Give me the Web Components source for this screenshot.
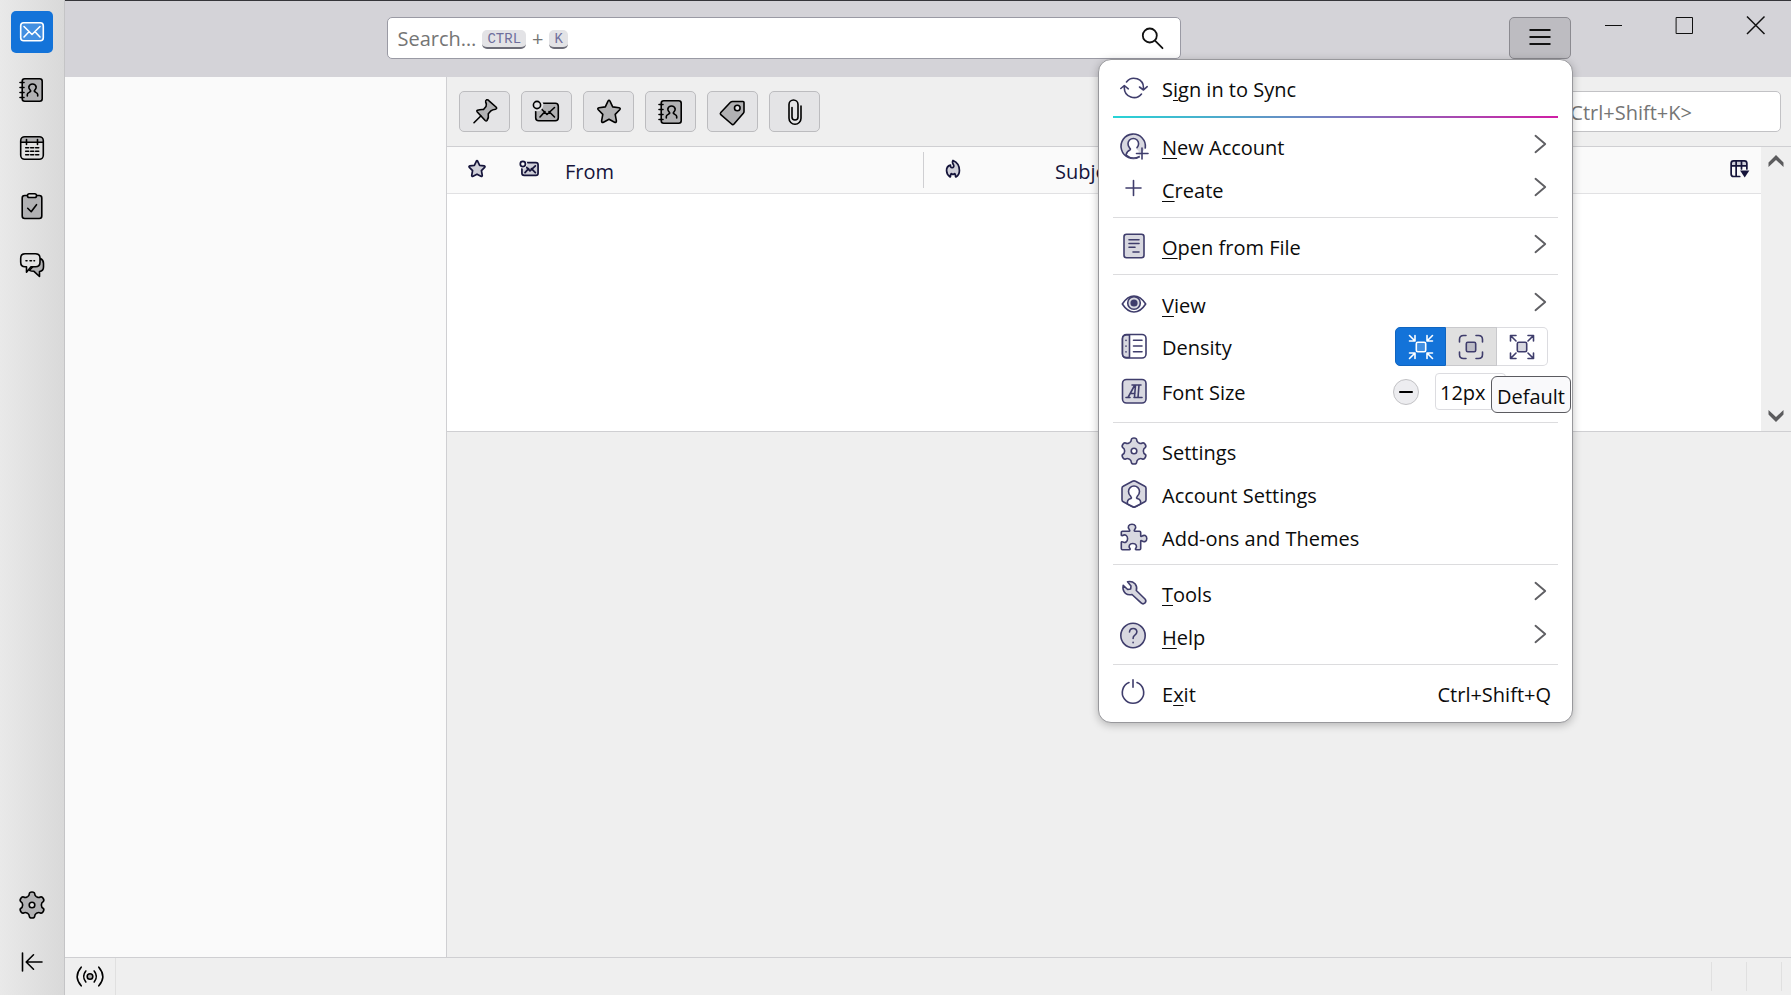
<!DOCTYPE html>
<html lang="en">
<head>
<meta charset="utf-8">
<title>Mail</title>
<style>
  html, body { margin: 0; height: 100%; }
  body { font: 20px/27px "Open Sans", "Noto Sans", sans-serif; color: #0b0b0b; background: #efefef; overflow: hidden; }
</style>
</head>
<body>
<mail-window></mail-window>
<script>
const gearPath = (() => {
  const pts = [[-4.3, -8.4], [-2.7, -9.4], [-2.7, -11.2], [-2.6, -13], [0, -13], [2.6, -13], [2.7, -11.2], [2.7, -9.4], [4.3, -8.4]];
  let d = '';
  for (let k = 0; k < 6; k++) {
    const a = k * Math.PI / 3, c = Math.cos(a), s = Math.sin(a);
    const p = pts.map(([x, y]) => (14 + x * c - y * s).toFixed(2) + ' ' + (14 + x * s + y * c).toFixed(2));
    d += (k ? 'L' : 'M') + p[0] + 'Q' + p[1] + ' ' + p[2] + 'Q' + p[3] + ' ' + p[4] + 'Q' + p[5] + ' ' + p[6] + 'Q' + p[7] + ' ' + p[8];
  }
  return d + 'z';
})();

const ICONS = {
  mail: '<rect class="f" x="2.700" y="4.700" width="22.600" height="18" rx="3"/><path d="M6 8.500l8 8 8-8M6 19l5-5.300M22 19l-5-5.300"/>',
  contacts: '<rect class="f" x="4.200" y="2.700" width="20" height="22.600" rx="2.500"/><path d="M2 6.500h4M2 11.500h4M2 16.500h4M2 21.500h4M9.300 20v-1.500c0-2 2.800-2 3.400-3.300.300-.800-1.900-1.900-1.900-4.200a3.800 3.800 0 0 1 7.400 0c0 2.300-2.200 3.400-1.900 4.200.600 1.300 3.400 1.300 3.400 3.300V20"/>',
  calendar: '<path class="f" stroke="none" d="M3 8V6q0-3 3-3h16q3 0 3 3v2z"/><rect x="2.700" y="2.700" width="22.600" height="22.600" rx="4"/><path d="M3 8.200h22M8.500 5.500v5M19.500 5.500v5"/><path d="M7.700 13.800h3M12.700 13.800h3M17.700 13.800h3M7.700 17.300h3M12.700 17.300h3M17.700 17.300h3M7.700 20.800h3M12.700 20.800h3M17.700 20.800h3"/>',
  tasks: '<rect class="f" x="4.200" y="3.500" width="19.600" height="23" rx="2.500"/><rect class="b" x="9.500" y="1.700" width="9" height="3.800" rx="1.800"/><path d="M9.700 16.300l3.500 3.400 5.300-7"/>',
  chat: '<path class="f" d="M22.500 8.500q3 1.500 3 5v3.500q0 4-4 4.500v5l-5.500-5.200q-3 0-4.500-1z"/><path class="b" d="M7 3.700h10.500q4.500 0 4.500 4.500v4q0 4.500-4.500 4.500h-4.500l-4.500 5.500v-5.500H7q-4.300 0-4.300-4.500v-4q0-4.500 4.300-4.500z"/><path d="M8 10.700h1M12 10.700h1.500M16 10.700h.5"/>',
  gear: '<path class="f" d="' + gearPath + '"/><circle class="b" cx="14" cy="14" r="2.800"/>',
  collapse: '<path d="M4.500 4v18M24 13H8.500M15.500 5.800L8.200 13l7.300 7.200"/>',
  search: '<circle cx="11.800" cy="11.500" r="7"/><path d="M17 16.700l7.500 7.500"/>',
  lines: '<path stroke-linecap="butt" d="M3.500 6h21M3.500 13h21M3.500 20h21"/>',
  pin: '<path class="f" d="M15.500 1.800Q17 1.500 18 2.800l7 6.200q1.500 1.700-.5 2.200-3 .3-5 2l-2.200 2.600q.7 4-1.300 6.700-.8.900-1.800 0L6.300 14q-1-1.200.2-1.800 3-1 6-.7L15 8.500q.9-2.300-.3-4.500-.3-1.500.8-2.200z"/><path d="M9.800 18L3 24.700"/>',
  unread: '<rect class="f" x="2.700" y="5.200" width="22.600" height="17.600" rx="3"/><path d="M7 19l5-5.500M6.500 9l7.500 7.500 7.500-7M16 13.500l5.500 5.500"/><circle class="b" stroke="none" cx="4" cy="7" r="6.300"/><circle class="b" cx="4" cy="7" r="3.600"/>',
  star: '<path class="f" d="M13 3.200q1-1.800 2 0l2.700 5.700 6.300.8q2 .5.700 2l-4.500 4.700 1.200 6.500q0 2-1.900 1.300L14 21.300l-5.500 2.900q-1.900.7-1.900-1.300l1.200-6.500-4.500-4.700q-1.300-1.500.7-2l6.300-.8z"/>',
  tag: '<path class="f" d="M13.500 3.500h10.500q1 0 1 1v9q0 1-.7 1.700L15 26q-1.200 1.200-2.400 0L1.800 16.700q-1-1.100 0-2.200L11.500 4.300q.8-.8 2-.8z"/><circle class="b" cx="18.300" cy="10" r="2.800"/>',
  clip: '<path d="M20 8v12.200a6 6 0 0 1-12 0V6.500a4.500 4.500 0 0 1 9 0V19a3 3 0 0 1-6 0V9.500"/>',
  fire: '<path class="f" d="M14 2c-1.500 2.500-.5 4.500.8 6.300 1 2-.3 4-2 3.900-2-.2-2.600-1.800-2.300-3.700C6.500 9.500 4.800 13 5 16.500c.2 3.800 2 6.800 5 8.700 1-.7.300-2.300 1-4 1-1.600 1.600.3 3 .3s2-1.900 3-.3c.7 1.700 0 3.300 1 4 3-1.900 5-4.900 5-9.200C23 9.500 19.500 4.300 14 2z"/>',
  columns: '<path class="f" stroke="none" d="M3 9V6q0-3 3-3h15q3 0 3 3v3z"/><path d="M25 14V6q0-3.500-3.500-3.500h-15Q3 2.500 3 6v15q0 3.500 3.500 3.500H15M3 9.500h22M10 3v21.500M17.500 3v11"/><path fill="currentColor" stroke="none" d="M15.500 16h13l-6.500 10z"/>',
  up: '<path fill="currentColor" stroke="none" d="M14 6l7.500 7.500v4.500L14 11l-7.500 7v-4.500z"/>',
  down: '<path fill="currentColor" stroke="none" d="M14 22l-7.500-7.500v-4.500L14 17l7.500-7v4.500z"/>',
  online: '<circle class="f" cx="14" cy="13.500" r="2.800"/><path d="M9.800 8q-4.300 5.500 0 11M18.200 8q4.300 5.500 0 11M5.200 4.200q-8 9.300 0 18.600M22.800 4.200q8 9.300 0 18.600"/>',
  sync: '<path d="M23.500 15.500V14A9.500 9.500 0 0 0 6.500 8M4.300 12v2a9.700 9.700 0 0 0 17.200 6M19.500 13l4 3 3.700-3.300M.8 14.500L4.300 11.500l4 3.300"/>',
  newaccount: '<path class="f" d="M19 25A12.200 12.200 0 1 1 25.300 16"/><path class="b" d="M6.500 23q1-4 4-5 1-.8-.5-2.200-1.500-1.800-1.500-4a5 5 0 0 1 10 0q0 2.200-1.500 4-1.200 1.200 0 2l1.500 1 .5 6.500q-7 3-12.500-2.300z" stroke="none"/><path d="M19 24.800Q12 28 6 23q1-4 4-5 1-.8-.5-2.200-1.500-1.800-1.500-4a5.300 5.300 0 0 1 10.600 0q0 2.200-1.600 3.800M22 16v11M16.500 21.500h11.500"/>',
  plus: '<path d="M13.500 5.500v15M6 13h15"/>',
  file: '<rect class="f" x="4" y="2.200" width="20" height="23.600" rx="2.500"/><path d="M9 7.800h10M9 11.500h10M9 15.200h6M13 20h6"/>',
  eye: '<path class="b" d="M2.300 14Q7.500 6 14 6t11.700 8Q20.500 22 14 22T2.300 14z"/><circle class="f" cx="14" cy="13" r="6.300"/><circle cx="14" cy="13" r="3.600" fill="currentColor" stroke="none"/>',
  density: '<rect x="2.500" y="1.500" width="23.500" height="23.500" rx="4"/><path class="f" d="M9.500 2H6.500q-4 0-4 4v14.500q0 4 4 4h3z"/><path d="M13.500 7.300h8.500M13.500 13h8.500M13.500 18.700h8.500M6 7.300v.2M6 13v.2M6 18.700v.2"/>',
  font: '<rect class="f" x="2.500" y="1.500" width="23.500" height="23.500" rx="4"/><path d="M6 19.500h4M14 19.500h8M8 19.500L14.800 7H12M13.500 7h7.500M19 7l-1 12.500M15.500 7l-1 12M10 15.500h5"/>',
  account: '<path class="f" d="M12.500 1.200q1.500-.7 3 0l9.300 5q1.200.6 1.200 2v11.600q0 1.400-1.200 2l-9.300 5q-1.500.7-3 0l-9.300-5q-1.200-.6-1.200-2V8.200q0-1.400 1.200-2z"/><path class="b" d="M7.500 24q-1-4.500 3.500-5.500.8-.8-.5-2.500-2-2-2-4.500a5.500 5.500 0 0 1 11 0q0 2.500-2 4.500-1.300 1.700-.5 2.500 4.500 1 3.500 5.500L14 27.200z"/>',
  addons: '<path class="f" d="M2.500 8.200H9.200C9.900 8.200 9.900 7.300 9.400 6.700 7 4 8.800 1.200 12 1.200s5 2.800 2.600 5.500c-.5.6-.5 1.500.4 1.500H19.500a1.200 1.200 0 0 1 1.200 1.200v3.400c0 .8.7.9 1.300.4 2.200-1.800 4.800-.6 4.800 2.300s-2.600 4.100-4.800 2.300c-.6-.5-1.300-.4-1.300.4V25.600a1.200 1.200 0 0 1-1.200 1.200H16.200c-.9 0-1-.7-.5-1.400 1.800-2.400.4-4.900-2.900-4.900s-4.700 2.500-2.900 4.900c.5.7.4 1.400-.5 1.400H2.500a1.200 1.200 0 0 1-1.200-1.200V19.500c0-.8.7-.9 1.300-.6 2.600 1.600 5-.2 5-3.200s-2.400-4.800-5-3.200c-.6.3-1.300.2-1.300-.6V9.500a1.200 1.200 0 0 1 1.200-1.300z"/>',
  wrench: '<path class="f" d="M7.500 2.800q4.500-1 7.500 2 2.500 3 1.300 6.700l8.700 8.500q1.700 2 0 3.900-2 1.800-3.900 0L12 15.500q-3.700 1-6.500-1.200-3.300-3-2.300-8l4.500 4.200 3-.5.300-3z"/>',
  help: '<circle class="f" cx="13" cy="13.500" r="12.200"/><path d="M9.500 10q.3-3.500 3.700-3.500t3.700 3.300q0 2-2.300 3.500-1.500 1-1.500 3.200M13.100 20.400v.3"/>',
  power: '<path d="M9 3.600a10.700 10.700 0 1 0 8 0M13 .7v7.500"/>',
  chevron: '<path d="M9.500 5.800l9.700 8.200-9.700 8.200"/>',
  minus: '<path d="M8 14h12"/>',
  compact: '<rect class="f" x="9.300" y="9.300" width="9.400" height="9.400" rx="1.500"/><path d="M2.500 2.500L8 8M8 2.500V8H2.500M25.500 2.500L20 8M20 2.500V8h5.500M2.500 25.500L8 20M8 25.500V20H2.500M25.500 25.500L20 20M20 25.500V20h5.500"/>',
  normal: '<rect class="f" x="9.300" y="9.300" width="9.400" height="9.400" rx="1.500"/><path d="M2.500 9V6.500q0-4 4-4H9M19 2.500h2.500q4 0 4 4V9M25.500 19v2.500q0 4-4 4H19M9 25.500H6.500q-4 0-4-4V19"/>',
  relaxed: '<rect class="f" x="9.300" y="9.300" width="9.400" height="9.400" rx="1.500"/><path d="M8 8L2.500 2.500M2.500 8V2.500H8M20 8l5.500-5.500M25.500 8V2.500H20M8 20l-5.500 5.500M2.500 20v5.500H8M20 20l5.500 5.500M25.500 20v5.500H20"/>',
  minimise: '<path stroke-linecap="butt" stroke-width="1" d="M5 14.500h17"/>',
  maximise: '<rect x="5.500" y="6.500" width="16" height="16" stroke-width="1"/>',
  close: '<path stroke-linecap="butt" d="M5 5.500l17.500 17.500M22.500 5.500L5 23"/>'
};

function define(name, html, setup) {
  const template = document.createElement('template');
  template.innerHTML = html;
  customElements.define(name, class extends HTMLElement {
    constructor() {
      super();
      this.attachShadow({ mode: 'open' }).append(template.content.cloneNode(true));
    }
    connectedCallback() { if (setup) setup(this, this.shadowRoot); }
  });
}

define('mail-icon', `
<style>
  :host { display: inline-flex; flex: none; }
  svg { display: block; width: var(--icon-size, 28px); height: var(--icon-size, 28px); overflow: visible; fill: none; stroke: currentColor; stroke-width: var(--icon-stroke, 1.6); stroke-linecap: round; stroke-linejoin: round; }
  .f { fill: var(--icon-fill, #b1b1b3); }
  .b { fill: var(--icon-back, #e4e4e6); }
</style>
<svg viewBox="0 0 28 28" aria-hidden="true"></svg>`,
(el, root) => { root.querySelector('svg').innerHTML = ICONS[el.getAttribute('name')]; });

define('space-button', `
<style>
  :host { display: block; }
  button { display: flex; align-items: center; justify-content: center; width: 42px; height: 42px; padding: 0; border: 0; border-radius: 5px; background: none; color: #000; --icon-back: #e2e2e2; }
  :host([current]) button { background: #1373d9; color: #fff; --icon-fill: #428fe1; --icon-back: #1373d9; }
</style>
<button></button>`,
(el, root) => {
  const button = root.querySelector('button');
  button.innerHTML = `<mail-icon name="${el.getAttribute('icon')}"></mail-icon>`;
  button.setAttribute('aria-label', el.getAttribute('label'));
});

define('spaces-bar', `
<style>
  :host { display: flex; flex-direction: column; align-items: center; gap: 16px; padding: 11px 0; border-right: 1px solid #c4c4c6; background: linear-gradient(90deg, #e9e9e9, #d9d9d9); }
  .push { flex: 1; }
</style>
<space-button current icon="mail" label="Mail"></space-button>
<space-button icon="contacts" label="Address Book"></space-button>
<space-button icon="calendar" label="Calendar"></space-button>
<space-button icon="tasks" label="Tasks"></space-button>
<space-button icon="chat" label="Chat"></space-button>
<div class="push"></div>
<space-button icon="gear" label="Settings"></space-button>
<space-button icon="collapse" label="Hide spaces"></space-button>`);

define('title-bar', `
<style>
  :host { display: flex; align-items: flex-start; height: 76px; border-top: 1px solid #35353a; background: #d4d3d8; }
  .gap { flex: 1; }
  .search { display: flex; align-items: center; box-sizing: border-box; width: calc(46% + 1px); height: 42px; margin-top: 16px; padding: 0 14px 0 10px; border: 1px solid #9a9aa4; border-radius: 5px; background: #fff; color: #757575; }
  label { display: flex; align-items: center; gap: 6px; }
  kbd { box-sizing: border-box; height: 19px; margin-top: 2px; padding: 0 5px; border-radius: 5px; border-bottom: 2px solid #6d6d78; background: #e3e3e6; color: #6e6e9c; font: 14px/18px "Liberation Mono", monospace; }
  input { flex: 1; min-width: 0; height: 36px; padding: 0; border: 0; outline: 0; background: none; font: inherit; }
  mail-icon { --icon-stroke: 1.8; color: #111; }
  button { display: flex; align-items: center; justify-content: center; padding: 0; border: 0; background: none; color: #000; }
  .menu { box-sizing: border-box; width: 62px; height: 42px; margin: 16px 7px 0 6px; border: 1px solid #8b8a90; border-radius: 5px; background: #bdbcc1; }
  .ctl { width: 71px; height: 48px; }
  .ctl mail-icon { --icon-stroke: 1.5; }
</style>
<div class="gap"></div>
<div class="search"><label for="q">Search… <kbd>CTRL</kbd> + <kbd>K</kbd></label><input id="q" type="text"><mail-icon name="search"></mail-icon></div>
<div class="gap"></div>
<button class="menu" aria-label="Application menu"><mail-icon name="lines"></mail-icon></button>
<button class="ctl" aria-label="Minimise"><mail-icon name="minimise"></mail-icon></button>
<button class="ctl" aria-label="Maximise"><mail-icon name="maximise"></mail-icon></button>
<button class="ctl" aria-label="Close"><mail-icon name="close"></mail-icon></button>`);

define('filter-bar', `
<style>
  :host { display: flex; align-items: center; gap: 11px; box-sizing: border-box; height: 70px; padding: 0 10px 0 12px; border-bottom: 1px solid #cfcfd2; background: #efefef; }
  button { display: flex; align-items: center; justify-content: center; width: 51px; height: 41px; padding: 0; border: 1px solid #bcbcbf; border-radius: 5px; background: #e4e4e6; color: #000; }
  .push { flex: 1; }
  input { box-sizing: border-box; width: 382px; height: 41px; padding: 2px 10px 0; border: 1px solid #c2c2c5; border-radius: 5px; background: #fff; font: inherit; }
  input::placeholder { color: #757575; opacity: 1; }
</style>
<button aria-label="Keep filters applied"><mail-icon name="pin"></mail-icon></button>
<button aria-label="Unread"><mail-icon name="unread"></mail-icon></button>
<button aria-label="Starred"><mail-icon name="star"></mail-icon></button>
<button aria-label="Contact"><mail-icon name="contacts"></mail-icon></button>
<button aria-label="Tags"><mail-icon name="tag"></mail-icon></button>
<button aria-label="Attachment"><mail-icon name="clip"></mail-icon></button>
<div class="push"></div>
<input type="text" aria-label="Filter messages" placeholder="Filter messages &lt;Ctrl+Shift+K&gt;">`);

define('thread-list', `
<style>
  :host { display: flex; box-sizing: border-box; height: 285px; border-bottom: 1px solid #cfcfd2; background: #fff; }
  .rows { flex: 1; min-width: 0; }
  table { width: 100%; table-layout: fixed; border-collapse: collapse; }
  th { height: 46px; padding: 0; border-bottom: 1px solid #e1e1e3; background: #fafafa; color: #15143a; font-weight: 400; text-align: left; vertical-align: middle; --icon-size: 20px; --icon-stroke: 2.4; --icon-fill: #cfcfd8; --icon-back: #fafafa; }
  .i { text-align: center; }
  .i mail-icon { padding-bottom: 5px; vertical-align: middle; }
  th span { display: flex; align-items: center; box-sizing: border-box; height: 36px; padding: 3px 0 0 12px; }
  .from span { border-right: 1px solid #cfcfd2; }
  .subject span { padding-left: 73px; }
  .bar { display: flex; flex-direction: column; justify-content: space-between; align-items: center; box-sizing: border-box; width: 30px; padding: 2px 0 3px; background: #efefef; color: #5c5c5e; }
</style>
<div class="rows"><table>
  <colgroup><col style="width:60px"><col style="width:46px"><col style="width:371px"><col style="width:58px"><col><col style="width:44px"></colgroup>
  <thead><tr>
    <th class="i" aria-label="Starred"><mail-icon name="star"></mail-icon></th>
    <th class="i" aria-label="Read"><mail-icon name="unread"></mail-icon></th>
    <th class="from"><span>From</span></th>
    <th class="i" aria-label="Spam"><mail-icon name="fire"></mail-icon></th>
    <th class="subject"><span>Subject</span></th>
    <th class="i" aria-label="Columns"><mail-icon name="columns"></mail-icon></th>
  </tr></thead>
</table></div>
<div class="bar"><mail-icon name="up"></mail-icon><mail-icon name="down"></mail-icon></div>`);

define('status-bar', `
<style>
  :host { display: flex; align-items: stretch; box-sizing: border-box; height: 38px; border-top: 1px solid #cfcfd2; background: #efefef; }
  button { width: 51px; padding: 0; border: 0; border-right: 1px solid #e0e0e0; background: none; color: #000; display: flex; align-items: center; justify-content: center; }
  .push { flex: 1; }
  i { width: 34px; margin: 4px 0; border-left: 1px solid #e0e0e0; }
  i:last-child { width: 9px; }
</style>
<button aria-label="Online"><mail-icon name="online"></mail-icon></button>
<div class="push"></div><i></i><i></i><i></i>`);

define('menu-entry', `
<style>
  :host { display: block; }
  button { display: flex; align-items: center; box-sizing: border-box; width: 100%; height: 43px; padding: 0 21px; border: 0; background: none; color: inherit; font: inherit; text-align: left; }
  .icon { display: flex; width: 42px; color: #3f3d6c; }
  .text { flex: 1; margin-top: 3px; }
  .key { margin-top: 3px; }
  .arrow { display: none; margin: 0 -3px 3px 0; color: #5f5f63; --icon-stroke: 1.9; }
  :host([submenu]) .arrow { display: flex; }
</style>
<button role="menuitem"><span class="icon"></span><span class="text"><slot></slot></span><span class="key"><slot name="key"></slot></span><span class="arrow"><mail-icon name="chevron"></mail-icon></span></button>`,
(el, root) => { root.querySelector('.icon').innerHTML = `<mail-icon name="${el.getAttribute('icon')}"></mail-icon>`; });

define('menu-row', `
<style>
  :host { display: flex; align-items: center; box-sizing: border-box; height: 43px; padding: 0 24px 0 21px; }
  .icon { display: flex; width: 42px; color: #3f3d6c; }
  .text { flex: 1; margin-top: 1px; }
</style>
<span class="icon"></span><span class="text"><slot></slot></span><slot name="control"></slot>`,
(el, root) => { root.querySelector('.icon').innerHTML = `<mail-icon name="${el.getAttribute('icon')}"></mail-icon>`; });

define('density-picker', `
<style>
  :host { display: flex; color: #3f3d6c; }
  label { position: relative; display: flex; align-items: center; justify-content: center; box-sizing: border-box; width: 51px; height: 39px; border: 1px solid #dcdce0; border-left-width: 0; background: #fff; }
  input { position: absolute; inset: 0; margin: 0; opacity: 0; }
  .a { border: 1px solid #1065c0; border-radius: 5px 0 0 5px; background: #1373d9; color: #fff; --icon-fill: #428fe1; }
  .b { border-color: #c9c9cc; background: #e0e0e0; --icon-fill: #bcbcc6; }
  .c { border-radius: 0 5px 5px 0; }
</style>
<label class="a"><input type="radio" name="d" aria-label="Compact" checked><mail-icon name="compact"></mail-icon></label>
<label class="b"><input type="radio" name="d" aria-label="Default"><mail-icon name="normal"></mail-icon></label>
<label class="c"><input type="radio" name="d" aria-label="Relaxed"><mail-icon name="relaxed"></mail-icon></label>`);

define('font-stepper', `
<style>
  :host { display: flex; align-items: center; gap: 16px; }
  button { display: flex; align-items: center; justify-content: center; box-sizing: border-box; width: 26px; height: 26px; padding: 0; border: 1px solid #c2c2c5; border-radius: 50%; background: #ededf0; color: #000; --icon-stroke: 2; }
  .plus { --icon-size: 18px; }
  input { box-sizing: border-box; width: 71px; height: 37px; padding: 1px 4px 0; border: 1px solid #dcdce0; border-radius: 4px; background: #fff; color: inherit; font: inherit; }
</style>
<button aria-label="Smaller"><mail-icon name="minus"></mail-icon></button><input type="text" aria-label="Font size" value="12px"><button class="plus" aria-label="Larger"><mail-icon name="plus"></mail-icon></button>`);

define('app-menu', `
<style>
  :host { display: block; box-sizing: border-box; width: 475px; padding: 6px 0 8px; border: 1px solid #98989c; border-radius: 13px; background: #fff; box-shadow: 0 2px 8px rgba(0,0,0,.25); --icon-fill: #d8d8e0; --icon-back: #fff; }
  hr { height: 1px; margin: 7px 14px 6px; border: 0; background: #dcdcde; }
  hr.sync { height: 2px; background: linear-gradient(90deg, #27d4d6, #6f85c2 45%, #d01ea4); }
  hr.wide { margin: 7px 14px; }
  hr.tight { margin: 6px 14px; }
  u { text-decoration-thickness: 1px; text-underline-offset: 3px; text-decoration-skip-ink: none; }
  .tall { height: 47px; }
  .tip { position: absolute; right: 1px; top: 316px; box-sizing: border-box; height: 37px; padding: 2px 5px 0; border: 1px solid #5b5b60; border-radius: 6px; background: #f9f9fb; line-height: 36px; }
</style>
<menu-entry icon="sync">S<u>i</u>gn in to Sync</menu-entry>
<hr class="sync">
<menu-entry icon="newaccount" submenu><u>N</u>ew Account</menu-entry>
<menu-entry icon="plus" submenu><u>C</u>reate</menu-entry>
<hr>
<menu-entry icon="file" submenu><u>O</u>pen from File</menu-entry>
<hr class="wide">
<menu-entry icon="eye" submenu><u>V</u>iew</menu-entry>
<menu-row icon="density">Density<density-picker slot="control"></density-picker></menu-row>
<menu-row icon="font" class="tall">Font Size<font-stepper slot="control"></font-stepper></menu-row>
<hr>
<menu-entry icon="gear">Settings</menu-entry>
<menu-entry icon="account">Account Settings</menu-entry>
<menu-entry icon="addons">Add-ons and Themes</menu-entry>
<hr class="tight">
<menu-entry icon="wrench" submenu><u>T</u>ools</menu-entry>
<menu-entry icon="help" submenu><u>H</u>elp</menu-entry>
<hr>
<menu-entry icon="power">E<u>x</u>it<span slot="key">Ctrl+Shift+Q</span></menu-entry>
<div class="tip" role="tooltip">Default</div>`);

define('mail-window', `
<style>
  :host { display: grid; grid-template-columns: auto minmax(0, 1fr); height: 100vh; }
  spaces-bar { width: 64px; }
  .main { display: flex; flex-direction: column; min-height: 0; }
  .panes { display: flex; flex: 1; min-height: 0; }
  .folders { flex: none; width: 381px; border-right: 1px solid #cfcfd2; background: #fafafa; }
  .messages { flex: 1; min-width: 0; background: #efefef; }
  app-menu { position: absolute; top: 59px; right: 218px; }
</style>
<spaces-bar></spaces-bar>
<div class="main">
  <title-bar></title-bar>
  <div class="panes">
    <div class="folders"></div>
    <div class="messages"><filter-bar></filter-bar><thread-list></thread-list></div>
  </div>
  <status-bar></status-bar>
</div>
<app-menu></app-menu>`);
</script>
</body>
</html>
